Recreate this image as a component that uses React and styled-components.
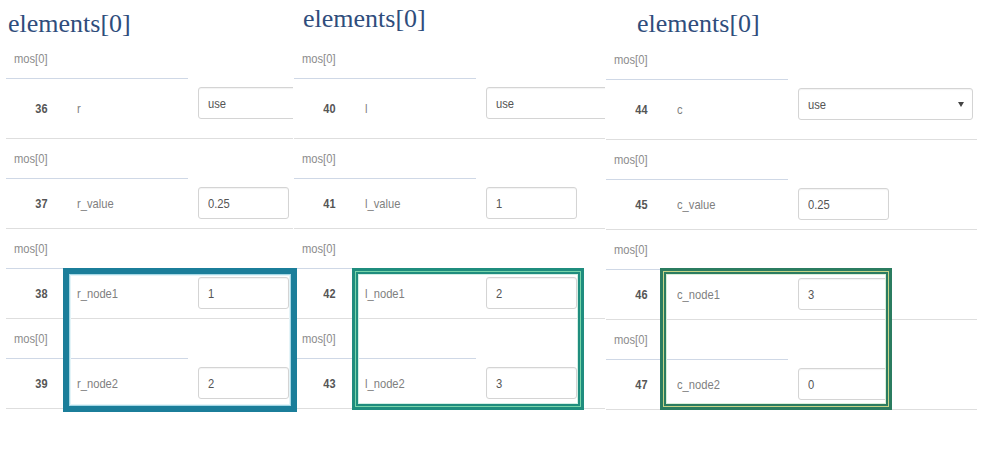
import React from "react";
import styled, { createGlobalStyle } from "styled-components";

const GlobalStyle = createGlobalStyle`
  html, body {
    margin: 0;
    padding: 0;
    background: #fff;
  }
  body {
    font-family: "Liberation Sans", Arial, sans-serif;
    overflow: hidden;
  }
`;

const Page = styled.div`
  position: relative;
  width: 997px;
  height: 449px;
  display: flex;
  align-items: flex-start;
  gap: 1px;
  padding-left: 6px;
  box-sizing: border-box;
`;

const Panel = styled.section`
  flex: none;
  width: ${(p) => p.$width}px;
  margin-top: ${(p) => p.$shift || 0}px;
  overflow: hidden;
`;

const Title = styled.h2`
  margin: 0;
  height: 30px;
  padding: ${(p) => p.$top}px 0 ${(p) => 9 - p.$top}px ${(p) => p.$left}px;
  font: 400 26px/30px "Liberation Serif", "Times New Roman", serif;
  color: #2f4d7c;
  white-space: nowrap;
`;

/* the source screenshot is squeezed sideways, so the text is narrow */
const Narrow = styled.span`
  display: inline-block;
  white-space: nowrap;
  transform: scaleX(${(p) => p.$scale || 0.86});
  transform-origin: ${(p) => (p.$right ? "right" : "left")} center;
`;

const MosRow = styled.div`
  width: 182px;
  height: 40px;
  box-sizing: border-box;
  padding-left: 8px;
  display: flex;
  align-items: center;
  border-bottom: 1px solid #cfd8e6;
  font-size: 13px;
  color: #8c8c8c;
`;

const DataRow = styled.div`
  height: ${(p) => p.$h}px;
  box-sizing: border-box;
  display: flex;
  align-items: center;
  border-bottom: 1px solid #dedede;
`;

const Num = styled.span`
  flex: none;
  width: 41px;
  text-align: right;
  font-size: 13px;
  font-weight: 700;
  color: #555;
`;

const Name = styled.span`
  flex: none;
  width: 121px;
  margin-left: 30px;
  font-size: 13px;
  color: #7f7f7f;
`;

const Field = styled.div`
  flex: none;
  align-self: flex-start;
  margin-top: 8px;
  width: ${(p) => (p.$select ? 175 : 91)}px;
  height: 32px;
  box-sizing: border-box;
  padding: 0 8px 0 9px;
  display: flex;
  align-items: center;
  justify-content: space-between;
  border: 1px solid #d4d4d4;
  border-radius: 3px;
  box-shadow: inset 0 1px 1px rgba(0, 0, 0, 0.05);
  font-size: 13px;
  color: #555;
`;

const Caret = styled.span`
  width: 0;
  height: 0;
  border-left: 3px solid transparent;
  border-right: 3px solid transparent;
  border-top: 5px solid #444;
`;

const Highlight = styled.div`
  position: absolute;
  left: ${(p) => p.$x}px;
  top: ${(p) => p.$y}px;
  width: ${(p) => p.$w}px;
  height: ${(p) => p.$h}px;
  box-sizing: border-box;
  border: ${(p) => p.$edge}px solid ${(p) => p.$dark};
  box-shadow: inset 0 0 0 1px ${(p) => p.$light},
    inset 0 0 0 ${(p) => p.$inner}px ${(p) => p.$dark},
    inset 0 0 0 ${(p) => p.$inner + 1}px ${(p) => p.$glow};
  pointer-events: none;
`;

const panels = [
  {
    width: 287,
    titleLeft: 2,
    titleTop: 9,
    rows: [
      { n: 36, name: "r", value: "use", select: true },
      { n: 37, name: "r_value", value: "0.25" },
      { n: 38, name: "r_node1", value: "1" },
      { n: 39, name: "r_node2", value: "2" },
    ],
  },
  {
    width: 311,
    titleLeft: 9,
    titleTop: 4,
    rows: [
      { n: 40, name: "l", value: "use", select: true },
      { n: 41, name: "l_value", value: "1" },
      { n: 42, name: "l_node1", value: "2" },
      { n: 43, name: "l_node2", value: "3" },
    ],
  },
  {
    width: 371,
    titleLeft: 31,
    titleTop: 8,
    shift: 1,
    rows: [
      { n: 44, name: "c", value: "use", select: true, caret: true },
      { n: 45, name: "c_value", value: "0.25" },
      { n: 46, name: "c_node1", value: "3" },
      { n: 47, name: "c_node2", value: "0" },
    ],
  },
];

const boxes = [
  { x: 63, y: 268, w: 234, h: 144, edge: 6, inner: 1, dark: "#1b7e9a", light: "#a6d8e6", glow: "#e4f4f8" },
  { x: 352, y: 268, w: 232, h: 142, edge: 3, inner: 3, dark: "#1f8d7e", light: "#78d5aa", glow: "#d3efe4" },
  { x: 660, y: 268, w: 232, h: 142, edge: 3, inner: 3, dark: "#2b7c60", light: "#c6d487", glow: "#dcefd8" },
];

const ParamPanel = ({ data }) => (
  <Panel $width={data.width} $shift={data.shift}>
    <Title $left={data.titleLeft} $top={data.titleTop}>
      elements[0]
    </Title>
    {data.rows.map((row, i) => (
      <React.Fragment key={row.n}>
        <MosRow>
          <Narrow>mos[0]</Narrow>
        </MosRow>
        <DataRow $h={i === 0 ? 60 : 50}>
          <Num>
            <Narrow $right $scale={0.84}>{row.n}</Narrow>
          </Num>
          <Name>
            <Narrow>{row.name}</Narrow>
          </Name>
          <Field $select={row.select}>
            <Narrow>{row.value}</Narrow>
            {row.caret && <Caret />}
          </Field>
        </DataRow>
      </React.Fragment>
    ))}
  </Panel>
);

export default function App() {
  return (
    <>
      <GlobalStyle />
      <Page>
        {panels.map((p, i) => (
          <ParamPanel key={i} data={p} />
        ))}
        {boxes.map((b, i) => (
          <Highlight
            key={i}
            $x={b.x}
            $y={b.y}
            $w={b.w}
            $h={b.h}
            $edge={b.edge}
            $inner={b.inner}
            $dark={b.dark}
            $light={b.light}
            $glow={b.glow}
          />
        ))}
      </Page>
    </>
  );
}
